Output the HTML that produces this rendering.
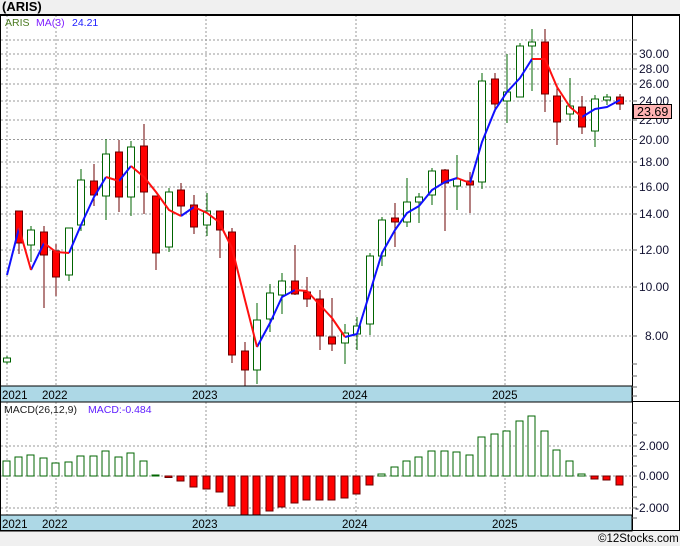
<!DOCTYPE html>
<html><head><meta charset="utf-8"><style>
html,body{margin:0;padding:0;background:#f0f0f0;}
svg{display:block;font-family:"Liberation Sans",sans-serif;}
</style></head><body>
<svg width="680" height="546" viewBox="0 0 680 546" xmlns="http://www.w3.org/2000/svg">
<rect x="0" y="0" width="680" height="546" fill="#f0f0f0"/>
<text x="2" y="11" font-size="13" font-weight="bold" fill="#000">(ARIS)</text>
<rect x="0" y="14" width="680" height="517" fill="#fff"/>
<!-- grid price -->
<g stroke="#999" stroke-width="1" stroke-dasharray="2,2">
<line x1="1" y1="40" x2="632" y2="40"/><line x1="1" y1="54" x2="632" y2="54"/><line x1="1" y1="69" x2="632" y2="69"/><line x1="1" y1="84" x2="632" y2="84"/><line x1="1" y1="101" x2="632" y2="101"/><line x1="1" y1="120" x2="632" y2="120"/><line x1="1" y1="139.5" x2="632" y2="139.5"/><line x1="1" y1="162" x2="632" y2="162"/><line x1="1" y1="187" x2="632" y2="187"/><line x1="1" y1="214" x2="632" y2="214"/><line x1="1" y1="250" x2="632" y2="250"/><line x1="1" y1="287" x2="632" y2="287"/><line x1="1" y1="336" x2="632" y2="336"/>
<line x1="7" y1="15" x2="7" y2="386"/><line x1="56" y1="15" x2="56" y2="386"/><line x1="206" y1="15" x2="206" y2="386"/><line x1="356" y1="15" x2="356" y2="386"/><line x1="505" y1="15" x2="505" y2="386"/>
<line x1="1" y1="446" x2="632" y2="446"/><line x1="1" y1="476" x2="632" y2="476"/><line x1="1" y1="508" x2="632" y2="508"/>
<line x1="7" y1="402" x2="7" y2="515"/><line x1="56" y1="402" x2="56" y2="515"/><line x1="206" y1="402" x2="206" y2="515"/><line x1="356" y1="402" x2="356" y2="515"/><line x1="505" y1="402" x2="505" y2="515"/>
</g>
<!-- candles -->
<g stroke-width="1">
<g stroke="#006400" fill="#fff">
<line x1="7" y1="356" x2="7" y2="364"/><rect x="3.5" y="358" width="7" height="4"/>
<line x1="31" y1="226" x2="31" y2="262"/><rect x="27.5" y="230" width="7" height="15"/>
<line x1="69" y1="228" x2="69" y2="281"/><rect x="65.5" y="228" width="7" height="47"/>
<line x1="81" y1="169" x2="81" y2="231"/><rect x="77.5" y="180" width="7" height="45"/>
<line x1="106" y1="139" x2="106" y2="220"/><rect x="102.5" y="154" width="7" height="42"/>
<line x1="131" y1="141" x2="131" y2="216"/><rect x="127.5" y="147" width="7" height="50"/>
<line x1="169" y1="188" x2="169" y2="252"/><rect x="165.5" y="192" width="7" height="55"/>
<line x1="207" y1="193" x2="207" y2="236"/><rect x="203.5" y="211" width="7" height="14"/>
<line x1="257" y1="303" x2="257" y2="384"/><rect x="253.5" y="320" width="7" height="50"/>
<line x1="270" y1="284" x2="270" y2="332"/><rect x="266.5" y="293" width="7" height="26"/>
<line x1="282" y1="273" x2="282" y2="314"/><rect x="278.5" y="281" width="7" height="14"/>
<line x1="345" y1="324" x2="345" y2="364"/><rect x="341.5" y="333" width="7" height="10"/>
<line x1="357" y1="317" x2="357" y2="350"/><rect x="353.5" y="326" width="7" height="8"/>
<line x1="370" y1="253" x2="370" y2="335"/><rect x="366.5" y="256" width="7" height="68"/>
<line x1="382" y1="217" x2="382" y2="266"/><rect x="378.5" y="220" width="7" height="36"/>
<line x1="407" y1="178" x2="407" y2="227"/><rect x="403.5" y="202" width="7" height="20"/>
<line x1="419" y1="193" x2="419" y2="223"/><rect x="415.5" y="197" width="7" height="5"/>
<line x1="432" y1="168" x2="432" y2="205"/><rect x="428.5" y="171" width="7" height="24"/>
<line x1="457" y1="155" x2="457" y2="210"/><rect x="453.5" y="179" width="7" height="7"/>
<line x1="482" y1="73" x2="482" y2="189"/><rect x="478.5" y="81" width="7" height="101"/>
<line x1="507" y1="54" x2="507" y2="123"/><rect x="503.5" y="92" width="7" height="9"/>
<line x1="520" y1="43" x2="520" y2="97"/><rect x="516.5" y="46" width="7" height="51"/>
<line x1="532" y1="29" x2="532" y2="91"/><rect x="528.5" y="42" width="7" height="4"/>
<line x1="570" y1="78" x2="570" y2="121"/><rect x="566.5" y="106" width="7" height="8"/>
<line x1="595" y1="95" x2="595" y2="147"/><rect x="591.5" y="99" width="7" height="32"/>
<line x1="607" y1="94" x2="607" y2="105"/><rect x="603.5" y="97" width="7" height="3"/>
</g>
<g stroke="#6b0000" fill="#f00">
<line x1="19" y1="211" x2="19" y2="254"/><rect x="15.5" y="211" width="7" height="32"/>
<line x1="44" y1="226" x2="44" y2="308"/><rect x="40.5" y="232" width="7" height="23"/>
<line x1="56" y1="244" x2="56" y2="296"/><rect x="52.5" y="251" width="7" height="26"/>
<line x1="94" y1="164" x2="94" y2="206"/><rect x="90.5" y="181" width="7" height="14"/>
<line x1="119" y1="140" x2="119" y2="212"/><rect x="115.5" y="152" width="7" height="45"/>
<line x1="144" y1="124" x2="144" y2="214"/><rect x="140.5" y="146" width="7" height="46"/>
<line x1="156" y1="196" x2="156" y2="270"/><rect x="152.5" y="196" width="7" height="57"/>
<line x1="181" y1="183" x2="181" y2="216"/><rect x="177.5" y="190" width="7" height="16"/>
<line x1="194" y1="195" x2="194" y2="234"/><rect x="190.5" y="205" width="7" height="22"/>
<line x1="220" y1="211" x2="220" y2="258"/><rect x="216.5" y="211" width="7" height="19"/>
<line x1="232" y1="228" x2="232" y2="363"/><rect x="228.5" y="232" width="7" height="123"/>
<line x1="245" y1="342" x2="245" y2="390"/><rect x="241.5" y="351" width="7" height="19"/>
<line x1="295" y1="245" x2="295" y2="295"/><rect x="291.5" y="281" width="7" height="13"/>
<line x1="307" y1="277" x2="307" y2="307"/><rect x="303.5" y="292" width="7" height="7"/>
<line x1="320" y1="290" x2="320" y2="350"/><rect x="316.5" y="299" width="7" height="37"/>
<line x1="332" y1="298" x2="332" y2="351"/><rect x="328.5" y="337" width="7" height="7"/>
<line x1="395" y1="203" x2="395" y2="247"/><rect x="391.5" y="218" width="7" height="4"/>
<line x1="445" y1="169" x2="445" y2="231"/><rect x="441.5" y="170" width="7" height="13"/>
<line x1="470" y1="172" x2="470" y2="213"/><rect x="466.5" y="181" width="7" height="4"/>
<line x1="495" y1="73" x2="495" y2="112"/><rect x="491.5" y="79" width="7" height="25"/>
<line x1="545" y1="29" x2="545" y2="112"/><rect x="541.5" y="42" width="7" height="52"/>
<line x1="557" y1="85" x2="557" y2="145"/><rect x="553.5" y="96" width="7" height="26"/>
<line x1="582" y1="96" x2="582" y2="134"/><rect x="578.5" y="107" width="7" height="20"/>
<line x1="620" y1="94" x2="620" y2="110"/><rect x="616.5" y="97" width="7" height="7"/>
</g>
</g>
<!-- MA -->
<g fill="none" stroke-width="2" stroke-linejoin="round">
<g stroke="#1010ff">
<polyline points="7,275 19,228"/><polyline points="31,270 44,243"/><polyline points="69,253 81,225 94,197 106,177"/><polyline points="119,181 131,166"/><polyline points="181,216 194,207"/><polyline points="257,347 270,323 282,297 295,290"/><polyline points="345,337 357,334 370,292 382,253 395,230 407,213 419,206 432,190 445,182 457,178"/><polyline points="470,183 482,142 495,110 507,92 520,78 532,59"/><polyline points="582,117 595,109 607,107 620,100"/>
</g>
<g stroke="#ff1010">
<polyline points="19,228 31,270"/><polyline points="44,243 56,252 69,253"/><polyline points="106,177 119,181"/><polyline points="131,166 144,177 156,192 169,210 181,216"/><polyline points="194,207 207,213 219,222 232,248 245,300 257,347"/><polyline points="295,290 307,291 320,305 332,318 345,337"/><polyline points="457,178 470,183"/><polyline points="532,59 545,59 557,87 570,107 582,117"/>
</g>
</g>
<!-- MACD bars -->
<g stroke="#006400" fill="#fff">
<rect x="3" y="461" width="7" height="15"/><rect x="15" y="457" width="7" height="19"/><rect x="27" y="455" width="7" height="21"/><rect x="40" y="458" width="7" height="18"/><rect x="52" y="463" width="7" height="13"/><rect x="65" y="462" width="7" height="14"/><rect x="77" y="456" width="7" height="20"/><rect x="90" y="456" width="7" height="20"/><rect x="102" y="451" width="7" height="25"/><rect x="115" y="457" width="7" height="19"/><rect x="127" y="453" width="7" height="23"/><rect x="140" y="461" width="7" height="15"/><rect x="152" y="475" width="7" height="1"/>
<rect x="378" y="474" width="7" height="2"/><rect x="391" y="467" width="7" height="9"/><rect x="403" y="461" width="7" height="15"/><rect x="415" y="457" width="7" height="19"/><rect x="428" y="451" width="7" height="25"/><rect x="441" y="451" width="7" height="25"/><rect x="453" y="452" width="7" height="24"/><rect x="466" y="455" width="7" height="21"/><rect x="478" y="437" width="7" height="39"/><rect x="491" y="434" width="7" height="42"/><rect x="503" y="431" width="7" height="45"/><rect x="516" y="421" width="7" height="55"/><rect x="528" y="416" width="7" height="60"/><rect x="541" y="431" width="7" height="45"/><rect x="553" y="450" width="7" height="26"/><rect x="566" y="461" width="7" height="15"/><rect x="578" y="474" width="7" height="2"/>
</g>
<g stroke="#6b0000" fill="#f00">
<rect x="165" y="476" width="7" height="1.5"/><rect x="177" y="476" width="7" height="5"/><rect x="190" y="476" width="7" height="11"/><rect x="203" y="476" width="7" height="13"/><rect x="216" y="476" width="7" height="16"/><rect x="228" y="476" width="7" height="30"/><rect x="241" y="476" width="7" height="39"/><rect x="253" y="476" width="7" height="39"/><rect x="266" y="476" width="7" height="35"/><rect x="278" y="476" width="7" height="31"/><rect x="291" y="476" width="7" height="27"/><rect x="303" y="476" width="7" height="24"/><rect x="316" y="476" width="7" height="24"/><rect x="328" y="476" width="7" height="24"/><rect x="341" y="476" width="7" height="22"/><rect x="353" y="476" width="7" height="18"/><rect x="366" y="476" width="7" height="9"/>
<rect x="591" y="476" width="7" height="3"/><rect x="603" y="476" width="7" height="4"/><rect x="616" y="476" width="7" height="9"/>
</g>
<!-- bands -->
<rect x="0" y="386" width="632" height="16" fill="#add8e6" stroke="#000"/>
<rect x="0" y="515" width="632" height="16" fill="#add8e6" stroke="#000"/>
<g font-size="11.5" fill="#000">
<text x="2" y="399">2021</text><text x="42" y="399">2022</text><text x="192" y="399">2023</text><text x="342" y="399">2024</text><text x="492" y="399">2025</text>
<text x="2" y="528">2021</text><text x="42" y="528">2022</text><text x="192" y="528">2023</text><text x="342" y="528">2024</text><text x="492" y="528">2025</text>
</g>
<!-- frame -->
<line x1="0" y1="15" x2="680" y2="15" stroke="#000" stroke-width="2"/>
<line x1="632" y1="401.5" x2="680" y2="401.5" stroke="#000"/>
<line x1="0" y1="530.5" x2="680" y2="530.5" stroke="#000"/>
<line x1="0.5" y1="14" x2="0.5" y2="531" stroke="#000"/>
<line x1="632.5" y1="14" x2="632.5" y2="531" stroke="#000"/>
<line x1="679.5" y1="14" x2="679.5" y2="531" stroke="#000"/>
<!-- ticks -->
<g stroke="#666">
<line x1="632" y1="40" x2="637" y2="40"/><line x1="632" y1="54" x2="637" y2="54"/><line x1="632" y1="69" x2="637" y2="69"/><line x1="632" y1="84" x2="637" y2="84"/><line x1="632" y1="101" x2="637" y2="101"/><line x1="632" y1="120" x2="637" y2="120"/><line x1="632" y1="139.5" x2="637" y2="139.5"/><line x1="632" y1="162" x2="637" y2="162"/><line x1="632" y1="187" x2="637" y2="187"/><line x1="632" y1="214" x2="637" y2="214"/><line x1="632" y1="250" x2="637" y2="250"/><line x1="632" y1="287" x2="637" y2="287"/><line x1="632" y1="336" x2="637" y2="336"/><line x1="632" y1="364" x2="637" y2="364"/><line x1="632" y1="376" x2="637" y2="376"/><line x1="632" y1="387" x2="637" y2="387"/><line x1="632" y1="396" x2="637" y2="396"/>
<line x1="632" y1="423" x2="637" y2="423"/><line x1="632" y1="435" x2="637" y2="435"/><line x1="632" y1="446" x2="637" y2="446"/><line x1="632" y1="456" x2="637" y2="456"/><line x1="632" y1="466" x2="637" y2="466"/><line x1="632" y1="476" x2="637" y2="476"/><line x1="632" y1="487" x2="637" y2="487"/><line x1="632" y1="497" x2="637" y2="497"/><line x1="632" y1="508" x2="637" y2="508"/><line x1="632" y1="518" x2="637" y2="518"/>
</g>
<g font-size="12" fill="#101030">
<text x="639" y="58">30.00</text><text x="639" y="73">28.00</text><text x="639" y="88">26.00</text><text x="639" y="105">24.00</text><text x="639" y="124">22.00</text><text x="639" y="144">20.00</text><text x="639" y="166">18.00</text><text x="639" y="191">16.00</text><text x="639" y="218">14.00</text><text x="639" y="254">12.00</text><text x="639" y="291">10.00</text><text x="645" y="340">8.00</text>
<text x="639" y="450">2.000</text><text x="639" y="480">0.000</text><text x="635" y="512">-2.000</text>
</g>
<rect x="633.5" y="104.5" width="38" height="14" fill="#ffb3b3" stroke="#000"/>
<text x="637" y="116" font-size="12.5" fill="#000">23.69</text>
<!-- legends -->
<text x="5" y="26" font-size="10.5" fill="#4a7a20">ARIS</text>
<text x="36" y="26" font-size="10.5" fill="#8020ff">MA(3)</text>
<text x="72" y="26" font-size="10.5" fill="#2020ff">24.21</text>
<text x="4" y="413" font-size="10.5" fill="#202020">MACD(26,12,9)</text>
<text x="88" y="413" font-size="10.5" fill="#6020ff">MACD:-0.484</text>
<text x="598" y="542" font-size="11.5" fill="#000">©12Stocks.com</text>
</svg>
</body></html>
